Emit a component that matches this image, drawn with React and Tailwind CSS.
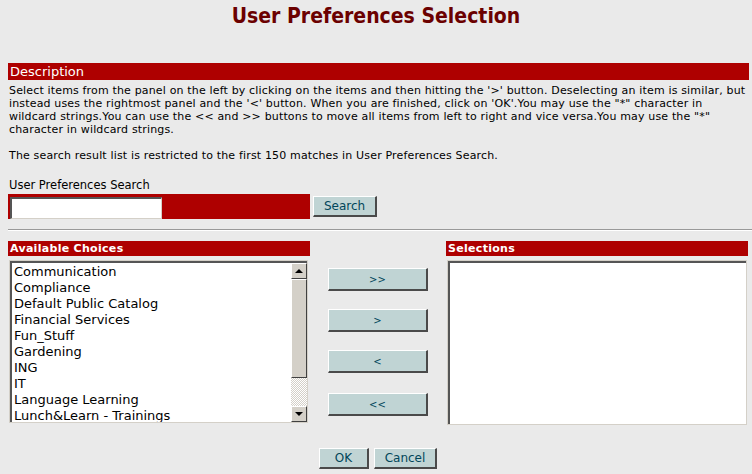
import React from 'react';

const items = [
  'Communication',
  'Compliance',
  'Default Public Catalog',
  'Financial Services',
  'Fun_Stuff',
  'Gardening',
  'ING',
  'IT',
  'Language Learning',
  'Lunch&Learn - Trainings',
];

const descLines = [
  "Select items from the panel on the left by clicking on the items and then hitting the '>' button. Deselecting an item is similar, but",
  "instead uses the rightmost panel and the '<' button. When you are finished, click on 'OK'.You may use the \"*\" character in",
  'wildcard strings.You can use the << and >> buttons to move all items from left to right and vice versa.You may use the "*"',
  'character in wildcard strings.',
];

const btn =
  'bg-[#c0d4d4] text-[#00465a] border-t border-l border-t-white border-l-white border-b-2 border-r-2 border-b-[#4a4a4a] border-r-[#4a4a4a] flex items-center justify-center';

const ScrollBox = ({ children }) => (
  <div className="w-[16px] h-[16px] bg-[#d4d0c8] border-t border-l border-t-white border-l-white border-b border-r border-b-[#404040] border-r-[#404040] flex items-center justify-center">
    {children}
  </div>
);

export default function App() {
  return (
    <div
      className="w-[752px] h-[474px] overflow-hidden bg-[#eaeaea] text-black"
      style={{ fontFamily: '"DejaVu Sans", Verdana, sans-serif' }}
    >
      {/* title */}
      <h1
        className="pt-[4px] h-[63px] text-center text-[21px] leading-[24px] font-bold text-[#6b0000]"
        style={{ fontFamily: '"DejaVu Sans Condensed", "DejaVu Sans", sans-serif' }}
      >
        User Preferences Selection
      </h1>

      {/* description */}
      <div className="mx-[8px] mr-[3px] h-[17px] bg-[#ae0000] text-white text-[13px] leading-[17px] px-[2px]">
        Description
      </div>
      <div className="px-[9px] pt-[4px] text-[11px] leading-[13px] tracking-[0.16px]">
        <div>
          {descLines.map((l) => (
            <div key={l} className="whitespace-nowrap">{l}</div>
          ))}
        </div>
        <p className="mt-[13px] whitespace-nowrap">
          The search result list is restricted to the first 150 matches in User Preferences Search.
        </p>
      </div>

      {/* search */}
      <div className="px-[9px] mt-[17px] text-[11.5px] leading-[13px]">User Preferences Search</div>
      <div className="flex items-start mt-[2px] ml-[8px]">
        <div className="w-[302px] h-[25px] bg-[#ae0000] pl-[2px] pt-[2px]">
          <input
            type="text"
            className="w-[152px] h-[22px] bg-white border-t-2 border-l-2 border-t-[#555] border-l-[#555] border-b border-r border-b-[#d4d0c8] border-r-[#d4d0c8] outline-none"
          />
        </div>
        <button className={`${btn} ml-[3px] mt-[2px] w-[64px] h-[21px] text-[12px]`}>Search</button>
      </div>

      <div className="ml-[8px] mt-[10px] h-[2px] border-t border-[#999] border-b border-b-white"></div>

      {/* choices */}
      <div className="flex mt-[10px] ml-[8px]">
        <div className="w-[302px]">
          <div className="h-[15px] bg-[#ae0000] text-white font-bold text-[11px] leading-[15px] px-[2px] tracking-[0.3px]">
            Available Choices
          </div>
          <div className="ml-[1px] mt-[4px] w-[299px] h-[163px] border border-[#d4d0c8]">
            <div className="h-full flex bg-white border-t-2 border-l-2 border-t-[#555] border-l-[#555]">
              <div className="flex-1 pl-[2px] pt-[1px] text-[13px] leading-[16px] overflow-hidden">
                {items.map((it) => (
                  <div key={it} className="whitespace-nowrap">{it}</div>
                ))}
              </div>
              <div className="w-[16px] flex flex-col">
                <ScrollBox>
                  <span className="w-0 h-0 border-l-[4px] border-r-[4px] border-b-[4px] border-l-transparent border-r-transparent border-b-black"></span>
                </ScrollBox>
                <div className="h-[99px] bg-[#d4d0c8] border-t border-l border-t-white border-l-white border-b border-r border-b-[#404040] border-r-[#404040]"></div>
                <div className="flex-1 bg-[repeating-conic-gradient(#ffffff_0_25%,#d4d0c8_0_50%)] bg-[length:2px_2px]"></div>
                <ScrollBox>
                  <span className="w-0 h-0 border-l-[4px] border-r-[4px] border-t-[4px] border-l-transparent border-r-transparent border-t-black"></span>
                </ScrollBox>
              </div>
            </div>
          </div>
        </div>

        <div className="w-[136px] flex flex-col items-center pt-[27px] text-[10px]">
          <button className={`${btn} w-[100px] h-[23px]`}>&gt;&gt;</button>
          <button className={`${btn} w-[100px] h-[23px] mt-[18px]`}>&gt;</button>
          <button className={`${btn} w-[100px] h-[23px] mt-[18px]`}>&lt;</button>
          <button className={`${btn} w-[100px] h-[23px] mt-[20px]`}>&lt;&lt;</button>
        </div>

        <div className="w-[302px]">
          <div className="h-[15px] bg-[#ae0000] text-white font-bold text-[11px] leading-[15px] px-[2px] tracking-[0.3px]">
            Selections
          </div>
          <div className="ml-[1px] mt-[4px] w-[300px] h-[165px] border border-[#d4d0c8]">
            <div className="h-full bg-white border-t-2 border-l-2 border-t-[#555] border-l-[#555]"></div>
          </div>
        </div>
      </div>

      {/* ok / cancel */}
      <div className="flex justify-center gap-[5px] mt-[23px] pl-[4px] text-[12px]">
        <button className={`${btn} w-[50px] h-[21px] text-[#9aaeb0]`}>OK</button>
        <button className={`${btn} w-[63px] h-[21px]`}>Cancel</button>
      </div>
    </div>
  );
}
